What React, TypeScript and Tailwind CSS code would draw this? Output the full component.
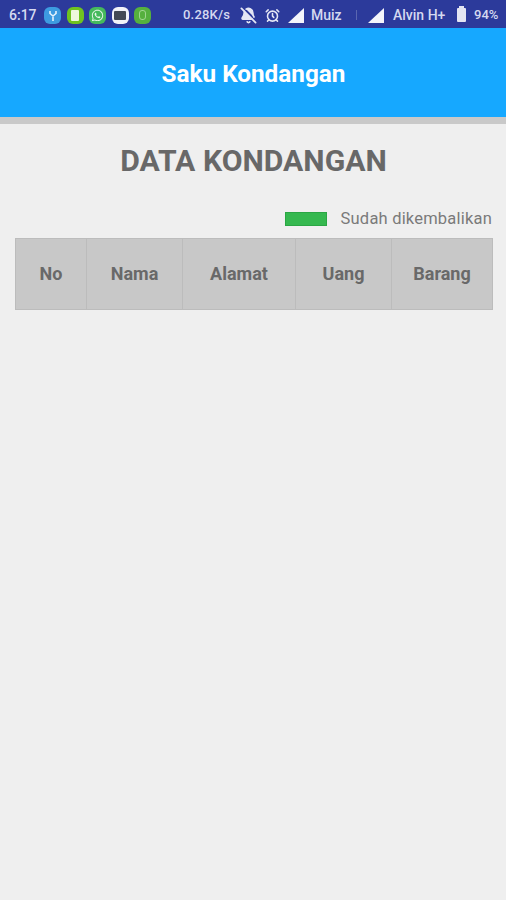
import { BellOff, AlarmClock } from "lucide-react";
import { FaWhatsapp } from "react-icons/fa";

const columns = [
    { label: "No", width: "w-[71px]" },
    { label: "Nama", width: "w-[96px]" },
    { label: "Alamat", width: "w-[113px]" },
    { label: "Uang", width: "w-[96px]" },
    { label: "Barang", width: "flex-1" },
];

function AppDot({ color, children }: { color: string; children: React.ReactNode }) {
    return (
        <span className={`flex h-[17px] w-[17px] items-center justify-center rounded-[6px] ${color}`}>
            {children}
        </span>
    );
}

function Signal() {
    return (
        <svg width="16" height="15" viewBox="0 0 16 15" className="block">
            <path d="M16 0V15H0Z" fill="#f4f5fb" />
        </svg>
    );
}

function StatusBar() {
    return (
        <div className="flex h-[28px] items-center bg-[#2c3a9b] pt-[2px] pl-[9px] text-[13px] font-medium whitespace-nowrap text-[#d5d9f0]">
            <span className="w-[35px] text-[14px]">6:17</span>
            <div className="flex items-center gap-[5.5px]">
                <AppDot color="bg-[#3d9be0]">
                    <svg width="10" height="11" viewBox="0 0 10 11">
                        <path d="M5 11V5M2 1v2.500L5 6l3-2.500V1" stroke="#e6f3fc" strokeWidth="1.600" fill="none" />
                    </svg>
                </AppDot>
                <AppDot color="bg-[#6fc21f]">
                    <span className="h-[11px] w-[8px] rounded-[1px] bg-[#eef7dc]" />
                </AppDot>
                <AppDot color="bg-[#45b95c]">
                    <FaWhatsapp size={13} className="text-[#e6f6e9]" />
                </AppDot>
                <AppDot color="bg-[#f2f3f8]">
                    <span className="h-[9px] w-[12px] rounded-[1px] bg-[#444a55]" />
                </AppDot>
                <AppDot color="bg-[#55b03e]">
                    <span className="h-[10px] w-[7px] rounded-[3px] border border-[#9fd690]" />
                </AppDot>
            </div>
            <span className="ml-[32px] w-[57px] tracking-[0.2px]">0.28K/s</span>
            <BellOff size={17} strokeWidth={2.500} fill="#e4e6f5" className="text-[#e4e6f5]" />
            <AlarmClock size={15} strokeWidth={2.500} className="ml-[8px] text-[#e4e6f5]" />
            <span className="ml-[8px]">
                <Signal />
            </span>
            <span className="ml-[7px] w-[45px] text-[14px]">Muiz</span>
            <span className="h-[10px] w-px bg-[#5a66b0]" />
            <span className="ml-[11px]">
                <Signal />
            </span>
            <span className="ml-[9px] w-[64px] text-[14px]">Alvin H+</span>
            <span className="relative h-[14px] w-[9px] rounded-[1px] bg-[#e3e5f3]">
                <span className="absolute -top-[2px] left-[2px] h-[2px] w-[5px] bg-[#e3e5f3]" />
            </span>
            <span className="ml-[8px]">94%</span>
        </div>
    );
}

export default function App() {
    return (
        <div className="flex h-[900px] w-[506px] flex-col overflow-hidden bg-[#efefef] font-['Roboto',sans-serif]">
            <StatusBar />
            <div className="flex h-[89px] items-center justify-center bg-[#16a8ff] pt-[4px] pl-[1px] text-[24.300px] font-bold text-white">
                Saku Kondangan
            </div>
            <div className="h-[7px] bg-[#c9c9c9]" />

            <h1 className="mt-[18px] pl-[1px] text-center text-[30.200px] leading-[38px] font-bold text-[#686868]">
                DATA KONDANGAN
            </h1>

            <div className="mt-[26px] flex h-[26px] items-center justify-end pr-[14px]">
                <span className="h-[14px] w-[42px] border border-[#2aa644] bg-[#35b84f]" />
                <span className="ml-[14px] text-[16.500px] tracking-[0.2px] text-[#7a7a7a]">Sudah dikembalikan</span>
            </div>

            <div className="mt-[6px] mr-[13px] ml-[15px] flex h-[72px] border border-[#bcbcbc] bg-[#c8c8c8]">
                {columns.map((col, i) => (
                    <div
                        key={col.label}
                        className={`flex items-center justify-center pb-[1px] text-[18px] font-bold text-[#696969] ${col.width} ${i < columns.length - 1 ? "border-r border-[#bcbcbc]" : ""}`}
                    >
                        {col.label}
                    </div>
                ))}
            </div>
        </div>
    );
}
